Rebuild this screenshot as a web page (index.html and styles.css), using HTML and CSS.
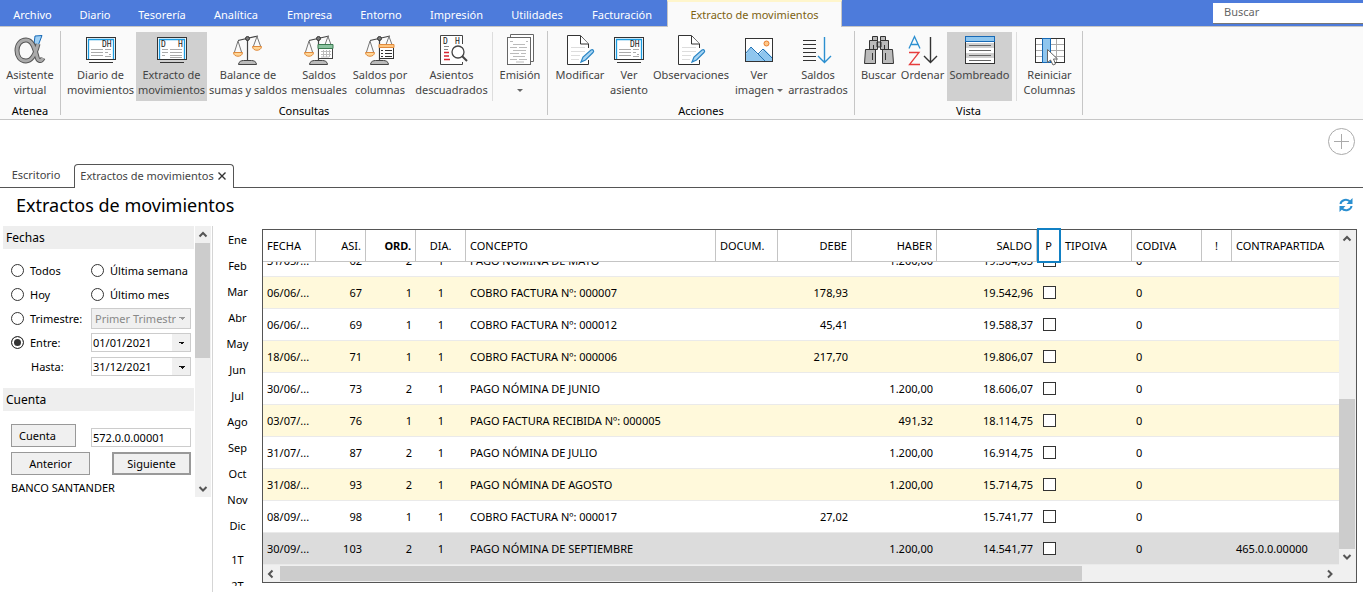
FILE: index.html
```html
<!DOCTYPE html>
<html lang="es">
<head>
<meta charset="utf-8">
<title>Extractos de movimientos</title>
<link rel="stylesheet" href="styles.css">
</head>
<body>
<svg class="defs" aria-hidden="true">
  <symbol id="card" viewBox="0 0 32 32">
    <rect x="1.5" y="3.5" width="29" height="22" fill="#fff" stroke="#333"/>
    <path d="M3.500 25V5.500h25V25" fill="none" stroke="#1a9be0" stroke-width="1.300"/>
    <path d="M4 28.500h24" stroke="#333"/>
  </symbol>
  <symbol id="scale" viewBox="0 0 32 32">
    <path d="M15.500 6v21M6 6.500L26 2" stroke="#444" stroke-width="1.200"/>
    <path d="M6 7L2.500 18M6 7l3.500 11M25 2.500L21.500 12M25 2.500L28.500 12" stroke="#777" fill="none"/>
    <circle cx="15.500" cy="4.500" r="2" fill="#777" stroke="#333"/>
    <path d="M1.500 18.500h9c0 5-9 5-9 0zM20.500 12.500h9c0 5-9 5-9 0z" fill="#ffd595" stroke="#e08a3c"/>
    <path d="M6.500 30.500c0-3 3-4 5-4h8c2 0 5 1 5 4z" fill="#bbb" stroke="#444"/>
  </symbol>
  <symbol id="edit" viewBox="0 0 32 32">
    <path d="M24.500 14V10l-8-8.500H3.500v29h21V26" fill="#fff" stroke="#333"/>
    <path d="M16.500 2v8h8" fill="#fff" stroke="#333"/>
    <path d="M7 13.500h14M7 17.500h14M7 21.500h9M7 25.500h8" stroke="#ddd"/>
    <path d="M17 28l2-5 8-7c2-1 3.500 1 2 2.500L21.500 26z" fill="#a9d5f3" stroke="#2b86c5" stroke-width="1.200"/>
  </symbol>
</svg>

<header>
  <nav class="menu">
    <button>Archivo</button><button>Diario</button><button>Tesorería</button><button>Analítica</button><button>Empresa</button><button>Entorno</button><button>Impresión</button><button>Utilidades</button><button>Facturación</button><button class="current">Extracto de movimientos</button>
    <input class="search" type="text" placeholder="Buscar" aria-label="Buscar">
  </nav>

  <div class="ribbon">
    <section class="group atenea">
      <div class="tools">
        <button><svg viewBox="0 0 32 32"><path d="M28 1.500l-7 .5-1 8 2 7z" fill="#9fd0f5" stroke="#1769b5"/><path d="M24 10c-2 8-5 17-12 17C6 27 3 22 3 16.500 3 10 7 6 12 6c7 0 9 10 11 17 1 4 4 5 6 1" fill="none" stroke="#555" stroke-width="5"/><path d="M24 10c-2 8-5 17-12 17C6 27 3 22 3 16.500 3 10 7 6 12 6c7 0 9 10 11 17 1 4 4 5 6 1" fill="none" stroke="#aaa" stroke-width="3"/></svg>Asistente<br>virtual</button>
      </div>
      <h2>Atenea</h2>
    </section>
    <section class="group consultas">
      <div class="tools">
        <button><svg viewBox="0 0 32 32"><use href="#card"/><text x="17" y="13" class="dh">DH</text><path d="M6 15.500h12M6 18.500h12M6 21.500h12M20 15.500h6M20 18.500h3M24 20.500h2M20 22.500h6" stroke="#aaa"/></svg>Diario de<br>movimientos</button>
        <button class="on"><svg viewBox="0 0 32 32"><use href="#card"/><text x="5" y="13" class="dh">D</text><text x="22" y="13" class="dh">H</text><path d="M6 15.500h6M6 18.500h6M6 21.500h3M14 15.500h12M14 18.500h12M14 21.500h12M14 23.500h12" stroke="#aaa"/></svg>Extracto de<br>movimientos</button>
        <button><svg viewBox="0 0 32 32"><use href="#scale"/></svg>Balance de<br>sumas y saldos</button>
        <button><svg viewBox="0 0 32 32"><use href="#scale"/><rect x="15.500" y="11.500" width="14" height="13" fill="#fff" stroke="#444"/><path d="M15 10.500h15v4H15z" fill="#8cc3a0" stroke="#3a7a50"/><path d="M18 17.500h10M18 20.500h10M18 23h8M20.500 16v7M23.500 16v7M26.500 16v7" stroke="#bbb"/></svg>Saldos<br>mensuales</button>
        <button><svg viewBox="0 0 32 32"><use href="#scale"/><rect x="15.500" y="11.500" width="14" height="13" fill="#fff" stroke="#333"/><path d="M15 10.500h15v3H15z" fill="#ffc57f" stroke="#e08a3c"/><path d="M17 16.500h2m2 0h7M17 19.500h2m2 0h7M17 22.500h2m2 0h7" stroke="#333"/></svg>Saldos por<br>columnas</button>
        <button><svg viewBox="0 0 32 32"><path d="M26.500 10V1.500h-22v29h22V28" fill="#fff" stroke="#444"/><text x="7" y="10" class="dh">D</text><text x="19" y="10" class="dh">H</text><path d="M8 12.500h5M8 15.500h4" stroke="#888"/><path d="M8 18.500h5M8 22h5M8 25.500h6" stroke="#d8232f" stroke-width="1.400"/><circle cx="22" cy="18" r="6" fill="#fff" stroke="#444" stroke-width="1.300"/><path d="M26 22l5 5" stroke="#444" stroke-width="2"/></svg>Asientos<br>descuadrados</button>
        <button class="split"><svg viewBox="0 0 32 32"><path d="M6.500 3V.5h23v27H26" fill="#fff" stroke="#666"/><rect x="3.500" y="3.500" width="23" height="27" fill="#fff" stroke="#666"/><path d="M6 7.500h3m13 0h2M9 10.500h12M6 13.500h7m2 0h8M9 16.500h13M6 19.500h9m2 0h5M9 22.500h12M6 25.500h7m2 0h8M12 28h8" stroke="#bbb"/></svg>Emisión<br><i class="caret"></i></button>
      </div>
      <h2>Consultas</h2>
    </section>
    <section class="group acciones">
      <div class="tools">
        <button><svg viewBox="0 0 32 32"><use href="#edit"/></svg>Modificar<br>&nbsp;</button>
        <button><svg viewBox="0 0 32 32"><use href="#card"/><text x="17" y="13" class="dh">DH</text><path d="M6 15.500h12M6 18.500h12M6 21.500h12M20 15.500h6M20 18.500h3M24 20.500h2M20 22.500h6" stroke="#aaa"/></svg>Ver<br>asiento</button>
        <button><svg viewBox="0 0 32 32"><use href="#edit"/></svg>Observaciones<br>&nbsp;</button>
        <button><svg viewBox="0 0 32 32"><rect x="2.500" y="4.500" width="27" height="23" fill="#fff" stroke="#333"/><path d="M3 20l5-7 7 8 6-6 8 8v4H3z" fill="#8fc6ee"/><path d="M3 19l5-6 14 14M15 20l5-5 9 9" fill="none" stroke="#2273b5"/><circle cx="23.500" cy="9.500" r="2.500" fill="#ffc888" stroke="#e87d2f"/></svg>Ver<br>imagen <i class="caret"></i></button>
        <button><svg viewBox="0 0 32 32"><path d="M1 6.500h13M1 10.500h13M1 14.500h13M1 18.500h13M1 22.500h13M1 26.500h13" stroke="#333"/><path d="M22.500 3v25M16 22l6.500 6.500L29 22" fill="none" stroke="#2b8fd0" stroke-width="1.400"/></svg>Saldos<br>arrastrados</button>
      </div>
      <h2>Acciones</h2>
    </section>
    <section class="group vista">
      <div class="tools">
        <button><svg viewBox="0 0 32 32"><path d="M9.500 2.500h5v4h-5zM17.500 2.500h5v4h-5zM14 8h4v5h-4zM6.500 6.500h8v9h-8zM17.500 6.500h8v9h-8zM1.500 29.500l1-14h10v14zM30.500 29.500l-1-14h-10v14z" fill="#bbb" stroke="#333"/><path d="M10.500 11v4M21.500 11v4M9.500 19v7M22.500 19v7" stroke="#333"/></svg>Buscar<br>&nbsp;</button>
        <button><svg viewBox="0 0 32 32"><path d="M2 14.500L7.500 2.500l5.500 12M4 10.500h7" fill="none" stroke="#2b8fd0" stroke-width="1.300"/><path d="M2 18.500h10L2.500 30.500H13" fill="none" stroke="#e63c3c" stroke-width="1.300"/><path d="M23.500 3v25M17 22l6.500 6.500L30 22" fill="none" stroke="#333" stroke-width="1.400"/></svg>Ordenar<br>&nbsp;</button>
        <button class="on"><svg viewBox="0 0 32 32"><rect x="1.500" y="2.500" width="29" height="27" fill="#fff" stroke="#333"/><path d="M2 9h28v5H2zM2 19h28v5H2z" fill="#d0d0d0"/><path d="M5 11.500h22M5 16.500h22M5 21.500h22M5 26.500h22" stroke="#666"/><rect x="1.500" y="2.500" width="29" height="5" fill="#8fc6ee" stroke="#1769b5"/></svg>Sombreado<br>&nbsp;</button>
        <button class="split"><svg viewBox="0 0 32 32"><rect x="1.500" y="4.500" width="29" height="24" fill="#fff"/><path d="M2 10.500h28M2 16.500h28M2 22.500h28M22.500 5v23" stroke="#aaa"/><rect x="1.500" y="4.500" width="29" height="24" fill="none" stroke="#333"/><rect x="8.500" y="4.500" width="8" height="24" fill="#8fc6ee" stroke="#1769b5"/><path d="M13.500 15.500v13l3-2.500 2.500 5 2.500-1-2-5h4z" fill="#fff" stroke="#666"/></svg>Reiniciar<br>Columnas</button>
      </div>
      <h2>Vista</h2>
    </section>
  </div>
</header>

<div class="bar">
  <button class="add" aria-label="Añadir"><svg viewBox="0 0 28 28"><circle cx="14.500" cy="13.500" r="13" fill="#fff" stroke="#aaa"/><path d="M14.500 6v15M7 13.500h15" stroke="#aaa"/></svg></button>
</div>
<nav class="docs">
  <button>Escritorio</button>
  <div class="doc"><span>Extractos de movimientos</span><button aria-label="Cerrar"><svg viewBox="0 0 8 8"><path d="M.5.500l7 7M7.500.500l-7 7" stroke="#333" stroke-width="1.400"/></svg></button></div>
</nav>

<div class="title">
  <h1>Extractos de movimientos</h1>
  <button aria-label="Actualizar"><svg viewBox="0 0 14 14"><path d="M1.500 6C2 2 8 0 11.500 4M12.500 8C12 12 6 14 2.500 10" fill="none" stroke="#2b8fd0" stroke-width="2"/><path d="M13.500 0v6h-6zM.5 14V8h6z" fill="#2b8fd0"/></svg></button>
</div>

<main>
  <aside>
    <form class="panel">
      <h3>Fechas</h3>
      <div class="dates">
        <label><input type="radio" name="f">Todos</label>
        <label><input type="radio" name="f">Última semana</label>
        <label><input type="radio" name="f">Hoy</label>
        <label><input type="radio" name="f">Último mes</label>
        <label><input type="radio" name="f">Trimestre:</label>
        <select aria-label="Trimestre" disabled><option>Primer Trimestr</option></select>
        <label><input type="radio" name="f" checked>Entre:</label>
        <select aria-label="Entre"><option>01/01/2021</option></select>
        <label class="until" for="hasta">Hasta:</label>
        <select id="hasta"><option>31/12/2021</option></select>
      </div>
      <h3>Cuenta</h3>
      <div class="account">
        <button type="button" class="pick">Cuenta</button>
        <input type="text" value="572.0.0.00001" aria-label="Cuenta">
      </div>
      <div class="step">
        <button type="button">Anterior</button>
        <button type="button" class="next">Siguiente</button>
      </div>
      <p>BANCO SANTANDER</p>
    </form>
    <div class="vbar side"><svg viewBox="0 0 16 16"><path d="M4.500 10.500L8 7l3.500 3.500"/></svg><i></i><svg viewBox="0 0 16 16"><path d="M4.500 6L8 9.500 11.500 6"/></svg></div>
  </aside>

  <nav class="months">
    <button>Ene</button><button>Feb</button><button>Mar</button><button>Abr</button><button>May</button><button>Jun</button><button>Jul</button><button>Ago</button><button>Sep</button><button>Oct</button><button>Nov</button><button>Dic</button><button class="quarter">1T</button><button>2T</button>
  </nav>

  <div class="frame">
    <div class="view">
      <table>
        <colgroup><col class="c-date"><col class="c-num"><col class="c-num"><col class="c-num"><col class="c-text"><col class="c-doc"><col class="c-debe"><col class="c-haber"><col class="c-saldo"><col class="c-p"><col class="c-tipo"><col class="c-cod"><col class="c-mark"><col></colgroup>
        <thead><tr><th>FECHA</th><th class="r">ASI.</th><th class="r sorted">ORD.</th><th class="m">DIA.</th><th>CONCEPTO</th><th>DOCUM.</th><th class="r">DEBE</th><th class="r">HABER</th><th class="r">SALDO</th><th class="m">P</th><th>TIPOIVA</th><th>CODIVA</th><th class="m">!</th><th>CONTRAPARTIDA</th></tr></thead>
        <tbody>
          <tr><td>31/05/...</td><td class="r">62</td><td class="r">2</td><td class="m">1</td><td>PAGO NÓMINA DE MAYO</td><td></td><td></td><td class="r">1.200,00</td><td class="r">19.364,03</td><td><input type="checkbox" aria-label="P"></td><td></td><td>0</td><td></td><td></td></tr>
          <tr><td>06/06/...</td><td class="r">67</td><td class="r">1</td><td class="m">1</td><td>COBRO FACTURA Nº: 000007</td><td></td><td class="r">178,93</td><td></td><td class="r">19.542,96</td><td><input type="checkbox" aria-label="P"></td><td></td><td>0</td><td></td><td></td></tr>
          <tr><td>06/06/...</td><td class="r">69</td><td class="r">1</td><td class="m">1</td><td>COBRO FACTURA Nº: 000012</td><td></td><td class="r">45,41</td><td></td><td class="r">19.588,37</td><td><input type="checkbox" aria-label="P"></td><td></td><td>0</td><td></td><td></td></tr>
          <tr><td>18/06/...</td><td class="r">71</td><td class="r">1</td><td class="m">1</td><td>COBRO FACTURA Nº: 000006</td><td></td><td class="r">217,70</td><td></td><td class="r">19.806,07</td><td><input type="checkbox" aria-label="P"></td><td></td><td>0</td><td></td><td></td></tr>
          <tr><td>30/06/...</td><td class="r">73</td><td class="r">2</td><td class="m">1</td><td>PAGO NÓMINA DE JUNIO</td><td></td><td></td><td class="r">1.200,00</td><td class="r">18.606,07</td><td><input type="checkbox" aria-label="P"></td><td></td><td>0</td><td></td><td></td></tr>
          <tr><td>03/07/...</td><td class="r">76</td><td class="r">1</td><td class="m">1</td><td>PAGO FACTURA RECIBIDA Nº: 000005</td><td></td><td></td><td class="r">491,32</td><td class="r">18.114,75</td><td><input type="checkbox" aria-label="P"></td><td></td><td>0</td><td></td><td></td></tr>
          <tr><td>31/07/...</td><td class="r">87</td><td class="r">2</td><td class="m">1</td><td>PAGO NÓMINA DE JULIO</td><td></td><td></td><td class="r">1.200,00</td><td class="r">16.914,75</td><td><input type="checkbox" aria-label="P"></td><td></td><td>0</td><td></td><td></td></tr>
          <tr><td>31/08/...</td><td class="r">93</td><td class="r">2</td><td class="m">1</td><td>PAGO NÓMINA DE AGOSTO</td><td></td><td></td><td class="r">1.200,00</td><td class="r">15.714,75</td><td><input type="checkbox" aria-label="P"></td><td></td><td>0</td><td></td><td></td></tr>
          <tr><td>08/09/...</td><td class="r">98</td><td class="r">1</td><td class="m">1</td><td>COBRO FACTURA Nº: 000017</td><td></td><td class="r">27,02</td><td></td><td class="r">15.741,77</td><td><input type="checkbox" aria-label="P"></td><td></td><td>0</td><td></td><td></td></tr>
          <tr class="selected"><td>30/09/...</td><td class="r">103</td><td class="r">2</td><td class="m">1</td><td>PAGO NÓMINA DE SEPTIEMBRE</td><td></td><td></td><td class="r">1.200,00</td><td class="r">14.541,77</td><td><input type="checkbox" aria-label="P"></td><td></td><td>0</td><td></td><td>465.0.0.00000</td></tr>
        </tbody>
      </table>
    </div>
    <div class="vbar tall"><svg viewBox="0 0 16 16"><path d="M4.500 10.500L8 7l3.500 3.500"/></svg><i></i><svg viewBox="0 0 16 16"><path d="M4.500 6L8 9.500 11.500 6"/></svg></div>
    <div class="hbar"><svg viewBox="0 0 16 16"><path d="M9.500 4.500L6 8l3.500 3.500"/></svg><i></i><svg viewBox="0 0 16 16"><path d="M6 4.500L9.500 8 6 11.500"/></svg></div>
    <div class="focus"></div>
  </div>
</main>
</body>
</html>
```

FILE: styles.css
```css
* { box-sizing: border-box; }

body {
  margin: 0;
  min-height: 100vh;
  display: flex;
  flex-direction: column;
  background: #fff;
  color: #000;
  font: 11px/15px "Noto Sans", "Open Sans", sans-serif;
}

button, input, select { font: inherit; color: inherit; }
button { border: 0; padding: 0; background: none; white-space: nowrap; }
h1, h2, h3, p { margin: 0; font-weight: normal; }
svg { display: block; }
.defs { width: 0; height: 0; position: absolute; }

.menu {
  display: grid;
  grid-template-columns: 65px 60px 74px 74px 73px 70px 81px 80px 90px 175px 1fr;
  height: 27px;
  background: #4d7bdb;
  border-bottom: 1px solid #c6c6c6;
}
.menu button { color: #fff; padding-top: 2px; }
.menu .current {
  height: 27px;
  padding-top: 0;
  color: #7d6212;
  background: #fafafa;
  border: 1px solid #c6c6c6;
  border-top: 2px solid #fff6cc;
  border-bottom: 0;
}
.search {
  justify-self: end;
  width: 150px;
  height: 21px;
  margin-top: 3px;
  padding: 0 11px 3px;
  border: 0;
  border-bottom: 1px solid #777;
  outline: 0;
  background: #fff;
}
.search::placeholder { color: #666; opacity: 1; }

.ribbon {
  display: flex;
  height: 93px;
  padding-top: 4px;
  background: #fafafa;
  border-bottom: 1px solid #c6c6c6;
}
.group { height: 84px; border-right: 1px solid #c6c6c6; }
.group h2 { font-size: 11px; text-align: center; padding-top: 2px; }
.tools { display: grid; height: 70px; padding: 0 4px; }
.atenea .tools { grid-template-columns: 60px; padding: 0; }
.consultas .tools { grid-template-columns: 71px 71px 82px 60px 62px 81px 55px; padding-right: 0; }
.acciones .tools { grid-template-columns: 56px 42px 82px 54px 64px; }
.vista .tools { grid-template-columns: 39px 49px 69px 66px; padding-right: 0; }
.tools button {
  height: 69px;
  margin-top: 1px;
  padding: 2px 0 4px;
  color: #444;
}
.tools svg { width: 32px; height: 32px; margin: 0 auto 1px; }
.tools .on { background: #d0d0d0; }
.vista .on { width: 65px; }
.tools .split { border-left: 1px solid #ddd; }
.dh { font: 8px "DejaVu Sans Mono", monospace; fill: #222; }
.caret {
  display: inline-block;
  border: 3px solid transparent;
  border-top-color: #666;
  border-bottom: 0;
  vertical-align: 2px;
}

.bar { display: flex; justify-content: flex-end; padding: 8px; }
.add svg { width: 28px; height: 28px; }

.docs {
  display: flex;
  height: 24px;
  border-bottom: 1px solid #555;
  color: #444;
}
.docs > button { width: 74px; padding: 0 2px 2px 0; }
.doc {
  display: flex;
  align-items: center;
  justify-content: center;
  gap: 4px;
  width: 160px;
  height: 24px;
  padding: 0 2px 2px 0;
  background: #fff;
  border: 1px solid #555;
  border-bottom: 0;
  border-radius: 4px 4px 0 0;
}
.doc svg { width: 8px; height: 8px; }

.title {
  display: flex;
  align-items: center;
  justify-content: space-between;
  height: 38px;
  padding: 0 10px 4px 16px;
}
h1 { font-size: 18px; line-height: 24px; }
.title svg { width: 14px; height: 14px; }

main { flex: 1; display: flex; }
aside {
  display: flex;
  align-items: flex-start;
  width: 213px;
  padding-left: 3px;
  margin-bottom: 14px;
  border-right: 1px solid #d5d5d5;
}
.panel { width: 191px; }
h3 { font-size: 12px; line-height: 23px; padding: 0 3px; background: #eee; }
.dates {
  display: grid;
  grid-template-columns: 80px 100px;
  grid-auto-rows: 24px;
  align-items: center;
  padding: 9px 0 10px 8px;
}
.dates label { display: flex; align-items: center; gap: 6px; white-space: nowrap; }
.dates .until { padding-left: 20px; }
input[type="radio"] {
  appearance: none;
  width: 13px;
  height: 13px;
  margin: 0;
  border: 1px solid #333;
  border-radius: 50%;
  background: #fff;
}
input[type="radio"]:checked { background: #333; box-shadow: inset 0 0 0 2px #fff; }
select {
  --arrow: #111;
  appearance: none;
  width: 100px;
  height: 19px;
  padding: 0 18px 0 1px;
  border: 1px solid #ccc;
  border-radius: 0;
  background-color: #fff;
  background-image:
    linear-gradient(45deg, transparent 50%, var(--arrow) 0),
    linear-gradient(315deg, transparent 50%, var(--arrow) 0),
    linear-gradient(#f0f0f0, #f0f0f0);
  background-position: right 8px top 8px, right 5px top 8px, right;
  background-size: 3px 3px, 3px 3px, 18px 100%;
  background-repeat: no-repeat;
}
select:disabled {
  --arrow: #999;
  height: 21px;
  padding: 0 14px 0 3px;
  color: #888;
  opacity: 1;
  background-color: #f0f0f0;
}

.account { display: flex; justify-content: space-between; align-items: flex-end; padding: 13px 3px 5px 8px; }
.account input { width: 100px; height: 19px; padding: 0 1px; border: 1px solid #ccc; }
.account button, .step button { height: 23px; background: #f0f0f0; border: 1px solid #999; }
.account .pick { width: 65px; padding-right: 12px; }
.step { display: flex; justify-content: space-between; padding: 0 3px 0 8px; }
.step button { width: 79px; }
.step .next { border-width: 2px; }
.panel p { padding: 5px 8px; }

.vbar, .hbar { display: flex; background: #f0f0f0; }
.vbar { flex-direction: column; width: 16px; }
.vbar svg, .hbar svg { width: 16px; height: 16px; fill: none; stroke: #555; stroke-width: 2; flex: none; }
.vbar i, .hbar i { background: #ccc; }
.side { height: 271px; margin-left: 1px; }
.side i { width: 15px; height: 115px; margin: 1px 0 auto; }

.months { width: 49px; height: 360px; overflow: hidden; }
.months button { display: block; width: 49px; height: 26px; }
.months .quarter { margin-top: 8px; }

.frame {
  position: relative;
  flex: 1;
  display: grid;
  grid-template-columns: 1fr 17px;
  grid-template-rows: 1fr 17px;
  margin: 3px 6px 23px 0;
  border: 1px solid #555;
  min-width: 0;
}
.view {
  display: flex;
  flex-direction: column-reverse;
  overflow: hidden;
  height: 335px;
}
table { width: 100%; table-layout: fixed; border-spacing: 0; flex: none; }
.c-date { width: 53px; }
.c-num { width: 50px; }
.c-text { width: 250px; }
.c-doc { width: 62px; }
.c-debe { width: 74px; }
.c-haber { width: 85px; }
.c-saldo { width: 100px; }
.c-p { width: 24px; }
.c-tipo { width: 71px; }
.c-cod { width: 70px; }
.c-mark { width: 30px; }
th, td { height: 32px; padding: 0 4px; text-align: left; white-space: nowrap; overflow: hidden; }
th {
  position: sticky;
  top: 0;
  z-index: 1;
  padding-bottom: 1px;
  font-weight: normal;
  background: #fff;
  border-right: 1px solid #c4c4c4;
  border-bottom: 1px solid #c4c4c4;
}
th:last-child { border-right: 0; }
th.sorted { font-weight: bold; }
td { border-bottom: 1px solid #eaeaea; }
tbody tr:nth-child(even) { background: #fff9db; }
tbody .selected:nth-child(even) { background: #dcdcdc; }
.r { text-align: right; }
.m { text-align: center; }
input[type="checkbox"] {
  appearance: none;
  display: block;
  width: 13px;
  height: 13px;
  margin: 0 2px;
  border: 1px solid #333;
  background: #fff;
}
.tall { width: 17px; }
.tall i { width: 16px; height: 150px; margin-top: auto; }
.hbar { grid-column: 1 / -1; padding-right: 18px; align-items: center; }
.hbar i { width: 802px; height: 15px; margin: 0 auto 0 1px; }

.focus {
  position: absolute;
  top: -2px;
  left: 774px;
  width: 24px;
  height: 35px;
  border: 2px solid #1180c4;
  z-index: 2;
}
```
